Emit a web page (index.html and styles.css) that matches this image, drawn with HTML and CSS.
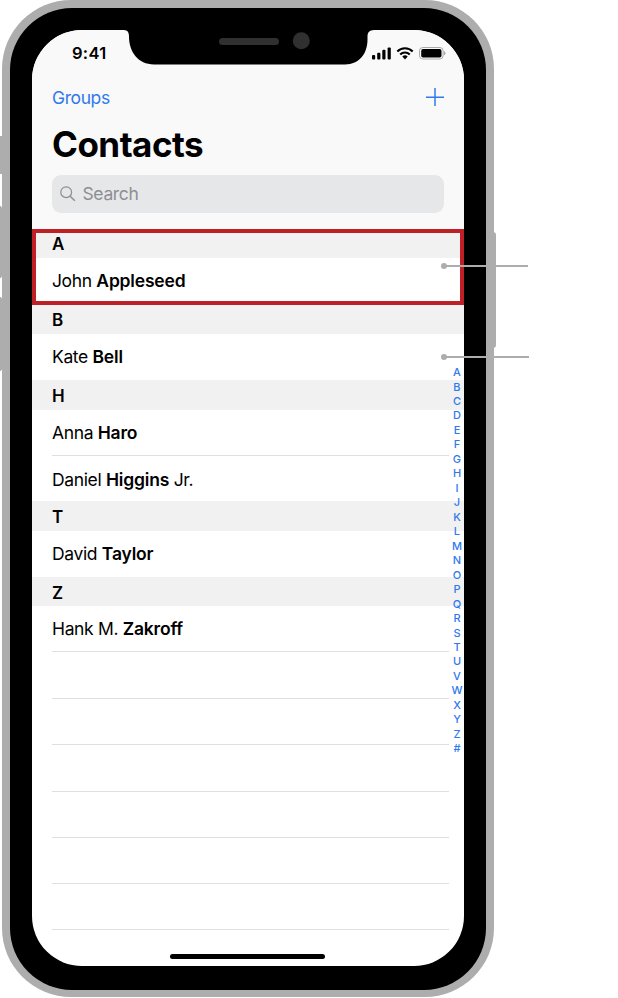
FILE: index.html
```html
<!DOCTYPE html>
<html lang="en">
<head>
<meta charset="utf-8">
<title>Contacts</title>
<link rel="stylesheet" href="styles.css">
</head>
<body>
<div class="stage">
  <i class="side-button mute"></i>
  <i class="side-button volume-up"></i>
  <i class="side-button volume-down"></i>
  <i class="side-button power"></i>
  <div class="phone">
    <div class="bezel">
      <main class="screen">
        <header class="top">
          <div class="status">
            <span class="time">9:41</span>
            <svg class="status-icons" width="74" height="16" viewBox="0 0 74 16">
              <rect x="0" y="10" width="3.2" height="4.4" rx="1"/>
              <rect x="5.2" y="7.8" width="3.2" height="6.6" rx="1"/>
              <rect x="10.3" y="4.8" width="3.2" height="9.6" rx="1"/>
              <rect x="15.6" y="2.4" width="3.2" height="12" rx="1"/>
              <g fill="none" stroke="#000" stroke-width="2.1">
                <path d="M25.3 6.5a10.8 10.8 0 0 1 15.4 0"/>
                <path d="M28.2 9.4a6.9 6.9 0 0 1 9.6 0"/>
              </g>
              <path d="M33 14.4l-2.7-2.900a4 4 0 0 1 5.400 0z"/>
              <rect x="47.500" y="2.500" width="23.600" height="11.500" rx="3.200" fill="none" stroke="#aaa"/>
              <rect x="49.200" y="4.100" width="20.300" height="8.400" rx="1.800"/>
              <path d="M71.800 6.100a2.300 2.300 0 0 1 0 4.400z" fill="#aaa"/>
            </svg>
          </div>
          <nav class="actions">
            <a class="groups">Groups</a>
            <svg width="18" height="18" viewBox="0 0 18 18" stroke="#3079ed" stroke-width="1.5"><path d="M9 0v18M0 9.2h18"/></svg>
          </nav>
          <h1>Contacts</h1>
          <div class="search">
            <svg width="16" height="16" viewBox="0 0 16 16" fill="none" stroke="#8e8e92" stroke-width="1.2"><circle cx="6.2" cy="6.2" r="5.4"/><path d="M10.1 10.2l4.8 4.6" stroke-width="1.5"/></svg>
            <span>Search</span>
          </div>
        </header>
        <section class="group featured">
          <h2>A</h2>
          <p><span>John <b>Appleseed</b></span></p>
        </section>
        <section class="group">
          <h2>B</h2>
          <p><span>Kate <b>Bell</b></span></p>
        </section>
        <section class="group">
          <h2>H</h2>
          <p class="ruled"><span>Anna <b>Haro</b></span></p>
          <p class="short"><span>Daniel <b>Higgins</b> Jr.</span></p>
        </section>
        <section class="group">
          <h2>T</h2>
          <p><span>David <b>Taylor</b></span></p>
        </section>
        <section class="group last">
          <h2>Z</h2>
          <p class="ruled"><span>Hank M. <b>Zakroff</b></span></p>
        </section>
        <div class="blank extra"></div>
        <div class="blank"></div>
        <div class="blank extra"></div>
        <div class="blank"></div>
        <div class="blank"></div>
        <div class="blank"></div>
        <div class="home"></div>
      </main>
    </div>
    <svg class="notch" width="252" height="37" viewBox="0 0 252 37">
      <path d="M0 2C3.500 2.300 4.900 4 5 8V9C5.200 24 14 36.400 30 36.400H221C235.500 36.400 243.300 25.500 243.500 12V8.500C243.600 4 245.500 2.500 250 2V0H0Z"/>
      <rect x="95" y="10" width="60" height="7" rx="3.500" fill="#303030"/>
      <circle cx="177.300" cy="12.800" r="8.500" fill="#303030"/>
    </svg>
    <div class="index">
      <span>A</span><span>B</span><span>C</span><span>D</span><span>E</span><span>F</span><span>G</span><span>H</span><span>I</span><span>J</span><span>K</span><span>L</span><span>M</span><span>N</span><span>O</span><span>P</span><span>Q</span><span>R</span><span>S</span><span>T</span><span>U</span><span>V</span><span>W</span><span>X</span><span>Y</span><span>Z</span><span>#</span>
    </div>
  </div>
  <i class="callout first"></i>
  <i class="callout second"></i>
</div>
</body>
</html>
```
FILE: styles.css
```css
* { box-sizing: border-box; }
body { margin: 0; background: #fff; font-family: Inter, "Liberation Sans", sans-serif; color: #000; }
.stage { position: relative; width: 618px; height: 998px; overflow: hidden; }
.phone { position: relative; width: 491.4px; height: 996.8px; margin-left: 2.3px; padding: 7.6px 7.7px; background: #adadad; border-radius: 69px; top: .4px; }
.bezel { height: 100%; padding: 22px; padding-bottom: 24px; background: #000; border-radius: 62px; }
.screen { height: 936px; background: #fff; border-radius: 50px; overflow: hidden; }
.side-button { position: absolute; background: #adadad; }
.mute { left: -5px; top: 136px; width: 9px; height: 38px; }
.volume-up, .volume-down { left: -5px; width: 9px; clip-path: polygon(0 0, 65% 0, 82% 3%, 100% 3%, 100% 97%, 82% 97%, 65% 100%, 0 100%); }
.volume-up { top: 206px; height: 72px; }
.volume-down { top: 297px; height: 74px; }
.power { left: 490px; top: 232px; width: 6px; height: 116px; border-radius: 0 3px 3px 0; }
.top { height: 199px; padding: 15px 20px 0; background: #f9f9f9; }
.status { display: flex; justify-content: space-between; height: 17px; margin-right: -2px; }
.time { margin-left: 20px; font-size: 16.5px; line-height: 17px; font-weight: 600; letter-spacing: .3px; }
.actions { display: flex; justify-content: space-between; align-items: center; height: 20px; margin-top: 25px; }
.groups { padding-top: 2px; color: #3079ed; font-size: 17.5px; line-height: 20px; letter-spacing: -.4px; }
h1 { margin: 17px 0 0; font-size: 35px; line-height: 40px; font-weight: 700; letter-spacing: -.5px; }
.search { display: flex; align-items: center; gap: 6.5px; height: 38px; margin-top: 11px; padding-left: 8px; border-radius: 9px; background: #e6e7e9; color: #8e8e92; font-size: 17.5px; letter-spacing: -.35px; }
.group h2 { display: flex; align-items: center; height: 29px; margin: 0; padding: 2px 0 0 20px; background: #f1f1f1; font-size: 17px; font-weight: 600; }
.group:nth-of-type(n+3) h2 { height: 30px; }
.group.last h2 { height: 29px; padding-top: 3px; }
.group p { display: flex; align-items: center; height: 46px; margin: 0 15px 0 20px; font-size: 17.5px; white-space: nowrap; letter-spacing: -.35px; }
.group b { font-weight: 600; letter-spacing: -.18px; }
.group p.short { height: 45px; padding-top: 2px; }
.group .ruled, .blank { border-bottom: 1px solid #dfdfe0; }
.group.last .ruled { padding-top: 1px; }
.featured { height: 76px; border: 4px solid #be2026; }
.group.featured h2 { height: 25px; padding: 0 0 3px 16px; }
.group.featured p { height: 43px; margin-left: 16px; padding-top: 3px; }
.blank { height: 46px; margin: 0 15px 0 20px; }
.blank.extra { height: 47px; }
.home { width: 155px; height: 5px; margin: 24px auto 0; border-radius: 3px; background: #000; }
.notch { position: absolute; left: 121.7px; top: 28px; }
.index { position: absolute; left: 445.7px; top: 364.7px; width: 18px; display: flex; flex-direction: column; align-items: center; color: #3079ed; font-size: 11px; font-weight: 550; }
.index span { height: 14.48px; line-height: 14.48px; }
.callout { position: absolute; left: 443px; height: 2px; background: #adadad; }
.callout::before { content: ""; position: absolute; left: -2px; top: -2px; width: 6px; height: 6px; border-radius: 50%; background: #adadad; }
.first { top: 265px; width: 85px; }
.second { top: 356px; width: 86px; }
```
